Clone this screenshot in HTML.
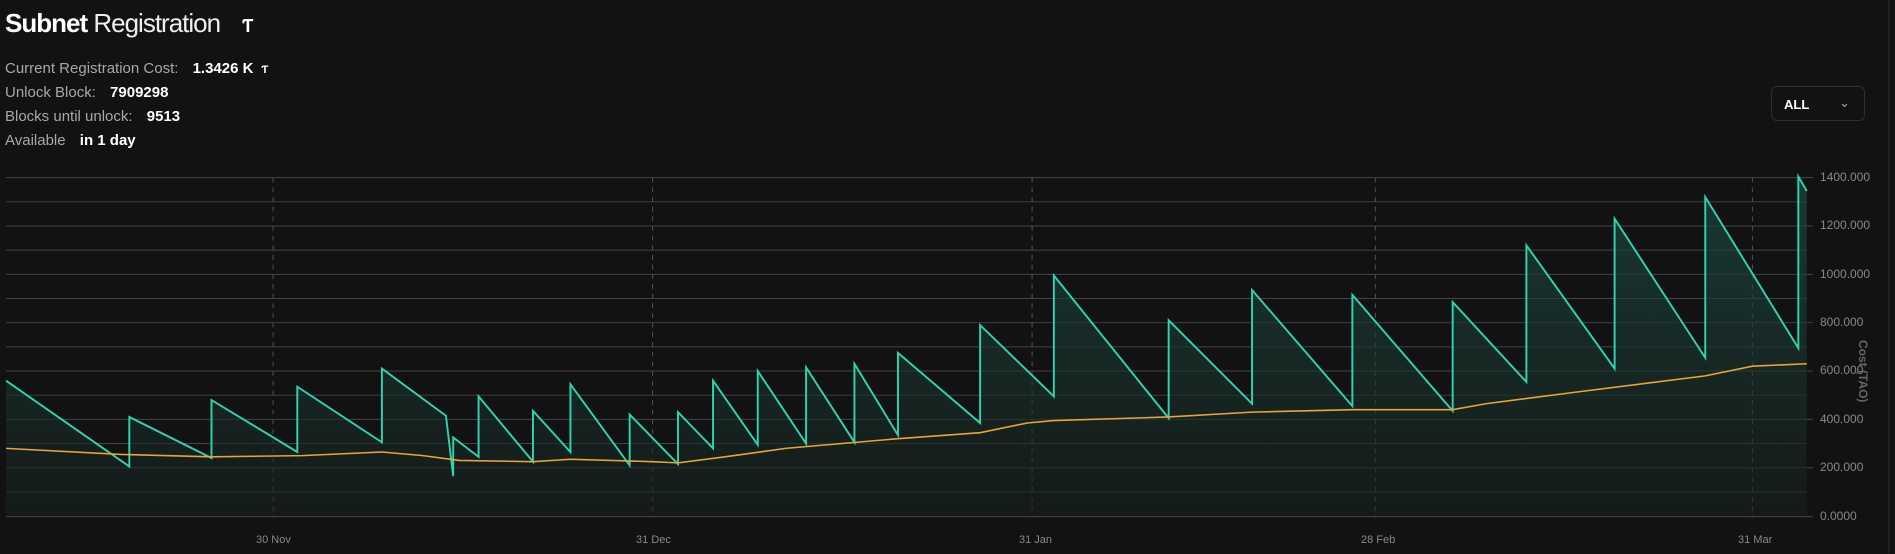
<!DOCTYPE html>
<html><head><meta charset="utf-8"><style>
body{margin:0;width:1895px;height:554px;background:#121212;overflow:hidden;font-family:"Liberation Sans",sans-serif;color:#fff;position:relative}
.t{position:absolute;left:5px;top:8px;font-size:26px;letter-spacing:-1px}
.t b{font-weight:700}
.t span{font-weight:300;color:#eee}
.r{position:absolute;left:5px;font-size:15px;color:#a8a8a8}
.r b{color:#fff;margin-left:10px}
.dd{position:absolute;left:1771px;top:86px;width:94px;height:35px;border:1px solid #2e2e2e;border-radius:6px;box-sizing:border-box;font-size:13px;font-weight:700;padding:10px 12px}
.lab{position:absolute;font-size:12px;color:#888;white-space:nowrap}
svg{position:absolute;left:0;top:0}
</style></head><body>
<div class="t"><b>Subnet</b> <span>Registration</span> <b style="margin-left:16px;font-size:18px">Ƭ</b></div>
<div class="r" style="top:60px">Current Registration Cost: <b>1.3426 K</b> <b style="font-size:11px;margin-left:4px">Ƭ</b></div>
<div class="r" style="top:84px">Unlock Block: <b>7909298</b></div>
<div class="r" style="top:108px">Blocks until unlock: <b>9513</b></div>
<div class="r" style="top:132px">Available <b>in 1 day</b></div>
<div class="dd">ALL<span style="position:absolute;right:14px;top:8px;color:#aaa;font-weight:400">⌄</span></div>
<svg width="1895" height="554" viewBox="0 0 1568 458.4">
<defs><linearGradient id="g" x1="0" y1="0" x2="0" y2="1"><stop offset="0" stop-color="#1d4a42" stop-opacity=".7"/><stop offset="1" stop-color="#16201e" stop-opacity=".6"/></linearGradient></defs>
<g stroke="#444" stroke-width="0.8">
<path d="M5 147H1500M5 167H1495M5 187H1500M5 207H1495M5 227H1500M5 247H1495M5 267H1500M5 287H1495M5 307H1500M5 327H1495M5 347H1500M5 367H1495M5 387H1500M5 407H1495M5 427.5H1500"/>
</g>
<g stroke="#555" stroke-width="0.8" stroke-dasharray="4 4"><path d="M226 147V428M540 147V428M854 147V428M1138 147V428M1450 147V428"/></g>
<path fill="url(#g)" d="M5 315L107 386L107 345L175 379L175 331L246 374L246 320L316 366L316 305L369 344L375 394L375 362L396 378L396 328L441 382L441 340L472 374L472 318L521 385L521 343L561 384L561 341L590 371L590 315L627 368L627 307L667 367L667 304L707 366L707 301L743 360L743 292L811 350L811 269L872 328L872 228L967 346L967 265L1036 334L1036 240L1119 336L1119 244L1202 340L1202 250L1263 316L1263 203L1336 305L1336 181L1411 296L1411 163L1488 288L1488 146L1495 158L1495 427L5 427Z"/>
<polyline fill="none" stroke="#2dd4b0" stroke-width="1.6" points="5,315 107,386 107,345 175,379 175,331 246,374 246,320 316,366 316,305 369,344 375,394 375,362 396,378 396,328 441,382 441,340 472,374 472,318 521,385 521,343 561,384 561,341 590,371 590,315 627,368 627,307 667,367 667,304 707,366 707,301 743,360 743,292 811,350 811,269 872,328 872,228 967,346 967,265 1036,334 1036,240 1119,336 1119,244 1202,340 1202,250 1263,316 1263,203 1336,305 1336,181 1411,296 1411,163 1488,288 1488,146 1495,158"/>
<polyline fill="none" stroke="#e8a531" stroke-width="1.3" points="5,371 100,376 175,378 250,377 316,374 350,377 380,381 441,382 472,380 540,382 561,383 600,378 650,371 743,363 811,358 850,350 872,348 967,345 1036,341 1119,339 1202,339 1230,334 1300,325 1411,311 1450,303 1495,301"/>
<path d="M1563 0V458" stroke="#2a2a2a" stroke-width="1"/>
</svg>
<div class="lab" style="left:1820px;top:170px">1400.000</div>
<div class="lab" style="left:1820px;top:218px">1200.000</div>
<div class="lab" style="left:1820px;top:267px">1000.000</div>
<div class="lab" style="left:1820px;top:315px">800.000</div>
<div class="lab" style="left:1820px;top:363px">600.000</div>
<div class="lab" style="left:1820px;top:412px">400.000</div>
<div class="lab" style="left:1820px;top:460px">200.000</div>
<div class="lab" style="left:1820px;top:509px">0.0000</div>
<div class="lab" style="left:1870px;top:340px;transform:rotate(90deg);transform-origin:left top;color:#666;font-weight:700">Cost (TAO)</div>
<div class="lab" style="left:256px;top:534px;font-size:11px">30 Nov</div>
<div class="lab" style="left:636px;top:534px;font-size:11px">31 Dec</div>
<div class="lab" style="left:1019px;top:534px;font-size:11px">31 Jan</div>
<div class="lab" style="left:1361px;top:534px;font-size:11px">28 Feb</div>
<div class="lab" style="left:1738px;top:534px;font-size:11px">31 Mar</div>
</body></html>
